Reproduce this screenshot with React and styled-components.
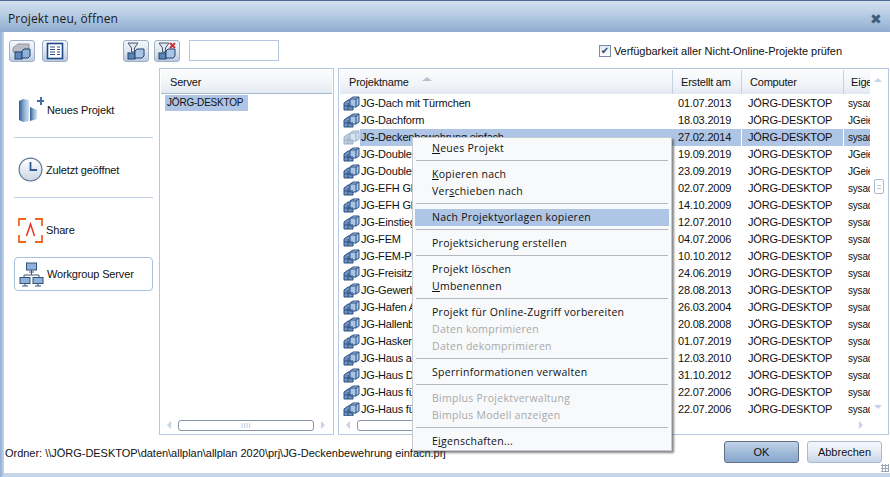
import React from 'react';
import styled, { createGlobalStyle } from 'styled-components';

const projects = [
  ['JG-Dach mit Türmchen', '01.07.2013', 'sysadmin'],
  ['JG-Dachform', '18.03.2019', 'JGeier'],
  ['JG-Deckenbewehrung einfach', '27.02.2014', 'sysadmin', true],
  ['JG-Doublette 1', '19.09.2019', 'JGeier'],
  ['JG-Doublette 2', '23.09.2019', 'JGeier'],
  ['JG-EFH Glas', '02.07.2009', 'sysadmin'],
  ['JG-EFH Glas 2', '14.10.2009', 'sysadmin'],
  ['JG-Einstieg', '12.07.2010', 'sysadmin'],
  ['JG-FEM', '04.07.2006', 'sysadmin'],
  ['JG-FEM-Platte', '10.10.2012', 'sysadmin'],
  ['JG-Freisitz', '24.06.2019', 'sysadmin'],
  ['JG-Gewerbe', '28.08.2013', 'sysadmin'],
  ['JG-Hafen A', '26.03.2004', 'sysadmin'],
  ['JG-Hallenbad', '20.08.2008', 'sysadmin'],
  ['JG-Hasker', '01.07.2019', 'sysadmin'],
  ['JG-Haus a', '12.03.2010', 'sysadmin'],
  ['JG-Haus D', '31.10.2012', 'sysadmin'],
  ['JG-Haus für', '22.07.2006', 'sysadmin'],
  ['JG-Haus für', '22.07.2006', 'sysadmin'],
];

const menu = [
  { items: [{ label: <><u>N</u>eues Projekt</> }] },
  { items: [{ label: <><u>K</u>opieren nach</> }, { label: <>Ver<u>s</u>chieben nach</> }] },
  { items: [{ label: <>Nach Projekt<u>v</u>orlagen kopieren</>, active: true }] },
  { items: [{ label: 'Projektsicherung erstellen' }] },
  { items: [{ label: 'Projekt löschen' }, { label: <><u>U</u>mbenennen</> }] },
  {
    items: [
      { label: 'Projekt für Online-Zugriff vorbereiten' },
      { label: 'Daten komprimieren', disabled: true },
      { label: 'Daten dekomprimieren', disabled: true },
    ],
  },
  { items: [{ label: 'Sperrinformationen verwalten' }] },
  {
    items: [
      { label: 'Bimplus Projektverwaltung', disabled: true },
      { label: 'Bimplus Modell anzeigen', disabled: true },
    ],
  },
  { items: [{ label: <>E<u>i</u>genschaften...</> }] },
];

const ProjectIcon = ({ dim }) => (
  <svg width="17" height="15" viewBox="0 0 17 15" style={{ opacity: dim ? 0.45 : 1, flex: 'none' }}>
    <path d="M1 7 L5 4 L10 4 L10 14 L1 14 Z" fill="#6f94c4" stroke="#2d4f80" />
    <path d="M7 3 L10 1 L16 1 L16 9 L13 11 L7 11 Z" fill="#a9c5e6" stroke="#2d4f80" />
    <path d="M7 3 L13 3 L13 11 M13 3 L16 1" fill="none" stroke="#2d4f80" />
    <path d="M1 10 H10 M5 7 V14" stroke="#2d4f80" fill="none" />
  </svg>
);

const CubesIcon = () => (
  <svg width="20" height="17" viewBox="0 0 20 17">
    <path d="M1 5 L6 1 L17 1 L17 5 L9 9 L1 9 Z" fill="#b9bec6" stroke="#8c939d" />
    <rect x="3" y="9" width="7" height="7" fill="#5f86b8" stroke="#23406c" />
    <path d="M10 8 L12 6 L18 6 L18 13 L16 15 L10 15 Z" fill="#8fb2da" stroke="#23406c" />
  </svg>
);

const ListIcon = () => (
  <svg width="18" height="18" viewBox="0 0 18 18">
    <rect x="1.5" y="1.5" width="15" height="15" fill="#fff" stroke="#1d4a86" strokeWidth="1.6" />
    <path d="M4 5 H9 M4 7.5 H9 M4 10 H9 M4 12.5 H9 M11 5 H14 M11 7.5 H14 M11 10 H14 M11 12.5 H14" stroke="#33507a" />
  </svg>
);

const FilterIcon = ({ cross }) => (
  <svg width="20" height="19" viewBox="0 0 20 19">
    <path d="M2 1 H12 L8.5 6 V10 H5.5 V6 Z" fill="#dfe6ee" stroke="#47566c" />
    <rect x="2" y="11" width="7" height="6" fill="#5f86b8" stroke="#23406c" />
    <path d="M9 9 L11 7 L18 7 L18 14 L16 16 L9 16 Z" fill="#a9c5e6" stroke="#23406c" />
    {cross && <path d="M13 1 L18 6 M18 1 L13 6" stroke="#c8323a" strokeWidth="2" />}
  </svg>
);

const NewProjectIcon = () => (
  <svg width="26" height="26" viewBox="0 0 26 26">
    <defs>
      <linearGradient id="tower" x1="0" x2="1" y1="0" y2="0">
        <stop offset="0" stopColor="#2f5a92" />
        <stop offset="0.5" stopColor="#8eaed2" />
        <stop offset="1" stopColor="#d5e1ee" />
      </linearGradient>
    </defs>
    <path d="M1 4 L5 2 L11 3 L11 24 L5 25 L1 23 Z" fill="url(#tower)" />
    <path d="M12 10 L19 13 L19 22 L12 24 Z" fill="url(#tower)" />
    <path d="M19 3 H22 V0 H24 V3 H26 V5 H24 V8 H22 V5 H19 Z" fill="#3f6da3" />
  </svg>
);

const ClockIcon = () => (
  <svg width="25" height="25" viewBox="0 0 25 25">
    <defs>
      <linearGradient id="clock" x1="0" x2="0" y1="0" y2="1">
        <stop offset="0" stopColor="#ffffff" />
        <stop offset="1" stopColor="#cbd6e4" />
      </linearGradient>
    </defs>
    <circle cx="12.5" cy="12.5" r="11.4" fill="url(#clock)" stroke="#5f7491" strokeWidth="1.2" />
    <path d="M12.5 5 V13 H19" fill="none" stroke="#2f5a92" strokeWidth="1.8" />
  </svg>
);

const ShareIcon = () => (
  <svg width="25" height="25" viewBox="0 0 25 25">
    <path d="M1 8 V1 H8 M17 1 H24 V8 M24 17 V24 H17 M8 24 H1 V17" fill="none" stroke="#f2651f" strokeWidth="1.8" />
    <path d="M8.5 18 L12.5 6 L16.5 18" fill="none" stroke="#e8321e" strokeWidth="1.5" />
  </svg>
);

const NetworkIcon = () => (
  <svg width="25" height="25" viewBox="0 0 25 25">
    <rect x="7.5" y="1" width="10" height="7" fill="#8fb2da" stroke="#33507a" />
    <path d="M10 10 H15 M12.5 8 V13 M5 17 V13 H20 V17" fill="none" stroke="#47566c" />
    <rect x="1" y="15.5" width="10" height="6" fill="#8fb2da" stroke="#33507a" />
    <rect x="14" y="15.5" width="10" height="6" fill="#8fb2da" stroke="#33507a" />
    <path d="M3 24 H9 M16 24 H22 M6 22 V24 M19 22 V24" stroke="#33507a" />
  </svg>
);

const GlobalStyle = createGlobalStyle`
  html, body {
    margin: 0;
    padding: 0;
    overflow: hidden;
  }
  * {
    box-sizing: border-box;
  }
`;

const Window = styled.div`
  position: relative;
  width: 890px;
  height: 477px;
  display: flex;
  flex-direction: column;
  overflow: hidden;
  font-family: "Liberation Sans", Arial, sans-serif;
  font-size: 11px;
  color: #111;
  background: linear-gradient(90deg, #8fadd0 0, #c5d6ea 4px);
`;
const TitleBar = styled.div`
  height: 32px;
  flex: none;
  display: flex;
  align-items: center;
  justify-content: space-between;
  padding: 4px 8px 0 8px;
  border-top: 1px solid #4f6a96;
  background: linear-gradient(180deg, #d3e0ef 0, #b9cee4 40%, #8fadd0 100%);
  font-family: "Open Sans", sans-serif;
  font-size: 12px;
  letter-spacing: 0.15px;
  color: #1a1a1a;
`;
const CloseX = styled.span`
  font-family: "DejaVu Sans", sans-serif;
  font-weight: bold;
  font-size: 14px;
  color: #3f5c7f;
`;
const Body = styled.div`
  flex: 1;
  margin: 0 0 4px 4px;
  background: #fff;
  display: flex;
  flex-direction: column;
  min-height: 0;
`;
const Toolbar = styled.div`
  height: 36px;
  flex: none;
  display: flex;
  align-items: flex-start;
  padding: 8px 0 0 5px;
`;
const ToolButton = styled.button`
  width: 26px;
  height: 22px;
  padding: 0;
  margin-right: ${(p) => p.$gap}px;
  display: flex;
  align-items: center;
  justify-content: center;
  border: 1px solid #9db0c8;
  border-radius: 3px;
  background: linear-gradient(180deg, #f4f7fb 0, #dfe7f1 50%, #b9cbe0 100%);
`;
const Search = styled.div`
  width: 90px;
  height: 21px;
  border: 1px solid #b4c8e2;
  background: #fff;
`;
const Availability = styled.label`
  margin-left: auto;
  margin-right: 48px;
  margin-top: 5px;
  display: flex;
  align-items: center;
  gap: 3px;
  font-size: 11px;
  letter-spacing: -0.05px;
`;
const Check = styled.span`
  width: 12px;
  height: 12px;
  border: 1px solid #7b8da6;
  background: linear-gradient(180deg, #e3e8ef, #fff);
  color: #2c4a75;
  display: flex;
  align-items: center;
  justify-content: center;
  font-size: 10px;
  line-height: 1;
  font-family: "DejaVu Sans", sans-serif;
`;
const Main = styled.div`
  height: 367px;
  flex: none;
  display: flex;
`;
const Nav = styled.nav`
  width: 155px;
  flex: none;
  padding: 20px 0 0 10px;
`;
const NavItem = styled.div`
  width: 139px;
  height: ${(p) => p.$height}px;
  display: flex;
  align-items: center;
  gap: 3px;
  padding: ${(p) => p.$top || 0}px 0 ${(p) => p.$bottom || 0}px 4px;
  font-size: 11px;
  letter-spacing: -0.15px;
  white-space: nowrap;
  ${(p) => p.$divider && 'border-bottom: 1px solid #c3d2e6;'}
  ${(p) => p.$framed && `
    border: 1px solid #a9c1e0;
    border-radius: 4px;
    margin-top: -1px;
  `}
`;
const Panel = styled.div`
  position: relative;
  width: ${(p) => p.$width}px;
  margin-right: ${(p) => p.$gap}px;
  flex: none;
  border: 1px solid #b4c8e2;
  padding: 1px 1px 0;
  display: flex;
  flex-direction: column;
`;
const HeaderRow = styled.div`
  height: 24px;
  flex: none;
  display: flex;
  align-items: center;
  background: linear-gradient(180deg, #fbfcfd 0, #f1f4f8 60%, #e3e9f1 100%);
  border-bottom: ${(p) => (p.$rule ? '1px solid #a7b7cc' : '0')};
  overflow: hidden;
  letter-spacing: -0.2px;
`;
const HeaderCell = styled.div`
  width: ${(p) => p.$width}px;
  flex: none;
  height: 100%;
  display: flex;
  align-items: center;
  padding-left: ${(p) => p.$pad}px;
  border-right: ${(p) => (p.$last ? '0' : '1px solid #c4d2e4')};
  position: relative;
  white-space: nowrap;
  overflow: hidden;
`;
const SortArrow = styled.span`
  width: 0;
  height: 0;
  margin-left: 13px;
  margin-bottom: 6px;
  border-left: 5px solid transparent;
  border-right: 5px solid transparent;
  border-bottom: 4px solid #b9c2cc;
`;
const ServerRow = styled.div`
  width: 83px;
  height: 16px;
  margin: 1px 0 0 4px;
  background: #aec5e6;
  padding-left: 2px;
  line-height: 16px;
  font-size: 10px;
  letter-spacing: -0.2px;
  white-space: nowrap;
`;
const Spacer = styled.div`
  flex: 1;
`;
const Rows = styled.div`
  flex: 1;
  min-height: 0;
  overflow: hidden;
  width: 531px;
  padding-top: 1px;
  letter-spacing: -0.2px;
`;
const Row = styled.div`
  height: 17px;
  display: flex;
  align-items: center;
  white-space: nowrap;
`;
const NameCell = styled.div`
  width: 333px;
  flex: none;
  height: 100%;
  display: flex;
  align-items: center;
  padding-left: 3px;
`;
const NameText = styled.span`
  flex: 1;
  height: 100%;
  line-height: 17px;
  padding-left: 1px;
  ${(p) => p.$selected && 'background: #aec5e6;'}
`;
const Cell = styled.div`
  width: ${(p) => p.$width}px;
  flex: none;
  height: 100%;
  line-height: 17px;
  padding-left: ${(p) => p.$pad}px;
  margin-right: 1px;
  overflow: hidden;
  font-size: ${(p) => p.$size || 11}px;
  ${(p) => p.$selected && 'background: #aec5e6;'}
`;
const HScroll = styled.div`
  height: 18px;
  flex: none;
  display: flex;
  align-items: center;
  padding: 0 ${(p) => p.$right}px 0 ${(p) => p.$left}px;
  gap: 7px;
`;
const ScrollArrow = styled.span`
  width: 0;
  height: 0;
  border-top: 4px solid transparent;
  border-bottom: 4px solid transparent;
  ${(p) => (p.$dir === 'left' ? 'border-right: 4px solid #c5d3e6;' : 'border-left: 4px solid #c5d3e6;')}
`;
const HThumb = styled.div`
  flex: ${(p) => (p.$grow ? 1 : 'none')};
  width: ${(p) => p.$width}px;
  height: 11px;
  border: 1px solid #8795a8;
  border-radius: 3px;
  background: #fff;
  display: flex;
  align-items: center;
  justify-content: center;
  color: #a9b8cc;
  font-size: 7px;
  letter-spacing: 0.5px;
  line-height: 1;
`;
const VScroll = styled.div`
  position: absolute;
  top: 1px;
  right: 0;
  width: 18px;
  bottom: 1px;
  background: #fff;
`;
const UpArrow = styled.span`
  position: absolute;
  top: 8px;
  left: 4px;
  border-left: 4px solid transparent;
  border-right: 4px solid transparent;
  border-bottom: 4px solid #c5d3e6;
`;
const DownArrow = styled.span`
  position: absolute;
  bottom: 24px;
  left: 4px;
  border-left: 4px solid transparent;
  border-right: 4px solid transparent;
  border-top: 4px solid #c5d3e6;
`;
const VThumb = styled.div`
  position: absolute;
  top: 109px;
  left: 4px;
  width: 10px;
  height: 15px;
  border: 1px solid #a8bad2;
  border-radius: 2px;
  background: repeating-linear-gradient(180deg, #fff 0 2px, #b8c8dc 2px 3px);
  background-clip: content-box;
  padding: 3px 2px;
`;
const Footer = styled.div`
  flex: 1;
  display: flex;
  align-items: flex-start;
  padding-left: 1px;
  position: relative;
`;
const PathText = styled.div`
  padding-top: 12px;
  font-size: 11px;
  letter-spacing: -0.02px;
  white-space: nowrap;
`;
const FooterButtons = styled.div`
  margin-left: auto;
  margin-right: 8px;
  margin-top: 6px;
  display: flex;
  gap: 8px;
`;
const DialogButton = styled.button`
  width: 75px;
  height: 22px;
  padding: 0;
  border-radius: 3px;
  font-family: inherit;
  font-size: 11px;
  color: #111;
  border: 1px solid ${(p) => (p.$primary ? '#5f6f84' : '#a9bad0')};
  background: ${(p) =>
    p.$primary
      ? 'linear-gradient(180deg, #c2d3e7 0, #9db9d8 55%, #86a6cb 100%)'
      : 'linear-gradient(180deg, #f4f7fb 0, #e5ebf3 50%, #c5d4e6 100%)'};
`;
const Grip = styled.div`
  position: absolute;
  right: 1px;
  bottom: 1px;
  width: 8px;
  height: 8px;
  background: radial-gradient(circle, #9aa6b6 1px, transparent 1.2px) 0 0 / 3px 3px;
`;
const ContextMenu = styled.div`
  position: absolute;
  left: 412px;
  top: 137px;
  width: 260px;
  padding: 2px 2px 0;
  background: #f7f9fb;
  border: 1px solid #c5cbd3;
  box-shadow: 2px 2px 2px rgba(70, 70, 70, 0.65);
  font-family: "Open Sans", sans-serif;
  font-size: 10.5px;
  letter-spacing: 0.27px;
`;
const MenuGroup = styled.div`
  padding: 0 0 3px;
  & + & {
    border-top: 1px solid #b5b9bf;
    margin: 0 1px;
    padding-top: 5px;
  }
  & + & > div {
    margin: 0 -1px;
  }
  &:last-child {
    padding-bottom: 0;
  }
`;
const MenuItem = styled.div`
  height: 17px;
  line-height: 17px;
  padding-left: 17px;
  color: ${(p) => (p.$disabled ? '#a9a9a9' : '#111')};
  background: ${(p) => (p.$active ? '#aec5e6' : 'transparent')};
  white-space: nowrap;
`;

export default function App() {
  return (
    <Window>
      <GlobalStyle />
      <TitleBar>
        <span>Projekt neu, öffnen</span>
        <CloseX>✖</CloseX>
      </TitleBar>
      <Body>
        <Toolbar>
          <ToolButton $gap={7}><CubesIcon /></ToolButton>
          <ToolButton $gap={55}><ListIcon /></ToolButton>
          <ToolButton $gap={5}><FilterIcon /></ToolButton>
          <ToolButton $gap={9}><FilterIcon cross /></ToolButton>
          <Search />
          <Availability>
            <Check>✔</Check>
            Verfügbarkeit aller Nicht-Online-Projekte prüfen
          </Availability>
        </Toolbar>
        <Main>
          <Nav>
            <NavItem $height={50} $bottom={6} $divider><NewProjectIcon />Neues Projekt</NavItem>
            <NavItem $height={60} $top={4} $divider><ClockIcon />Zuletzt geöffnet</NavItem>
            <NavItem $height={60} $top={4}><ShareIcon />Share</NavItem>
            <NavItem $height={34} $framed><NetworkIcon />Workgroup Server</NavItem>
          </Nav>
          <Panel $width={175} $gap={4}>
            <HeaderRow $rule>
              <HeaderCell $width={172} $pad={9} $last>Server</HeaderCell>
            </HeaderRow>
            <ServerRow>JÖRG-DESKTOP</ServerRow>
            <Spacer />
            <HScroll $left={6} $right={7}>
              <ScrollArrow $dir="left" />
              <HThumb $grow>IIII</HThumb>
              <ScrollArrow $dir="right" />
            </HScroll>
          </Panel>
          <Panel $width={551} $gap={0}>
            <HeaderRow>
              <HeaderCell $width={333} $pad={9}>Projektname<SortArrow /></HeaderCell>
              <HeaderCell $width={69} $pad={8}>Erstellt am</HeaderCell>
              <HeaderCell $width={102} $pad={8}>Computer</HeaderCell>
              <HeaderCell $width={27} $pad={7} $last>Eige</HeaderCell>
            </HeaderRow>
            <Rows>
              {projects.map(([name, date, owner, selected], i) => (
                <Row key={i}>
                  <NameCell>
                    <ProjectIcon dim={selected} />
                    <NameText $selected={selected}>{name}</NameText>
                  </NameCell>
                  <Cell $width={68} $pad={5} $selected={selected}>{date}</Cell>
                  <Cell $width={101} $pad={6} $selected={selected}>JÖRG-DESKTOP</Cell>
                  <Cell $width={27} $pad={4} $size={10} $selected={selected}>{owner}</Cell>
                </Row>
              ))}
            </Rows>
            <HScroll $left={6} $right={24}>
              <ScrollArrow $dir="left" />
              <HThumb $width={300} />
              <Spacer />
              <ScrollArrow $dir="right" />
            </HScroll>
            <VScroll>
              <UpArrow />
              <VThumb />
              <DownArrow />
            </VScroll>
          </Panel>
        </Main>
        <Footer>
          <PathText>Ordner: \\JÖRG-DESKTOP\daten\allplan\allplan 2020\prj\JG-Deckenbewehrung einfach.prj</PathText>
          <FooterButtons>
            <DialogButton $primary>OK</DialogButton>
            <DialogButton>Abbrechen</DialogButton>
          </FooterButtons>
          <Grip />
        </Footer>
      </Body>
      <ContextMenu>
        {menu.map((group, g) => (
          <MenuGroup key={g}>
            {group.items.map((item, i) => (
              <MenuItem key={i} $active={item.active} $disabled={item.disabled}>{item.label}</MenuItem>
            ))}
          </MenuGroup>
        ))}
      </ContextMenu>
    </Window>
  );
}
